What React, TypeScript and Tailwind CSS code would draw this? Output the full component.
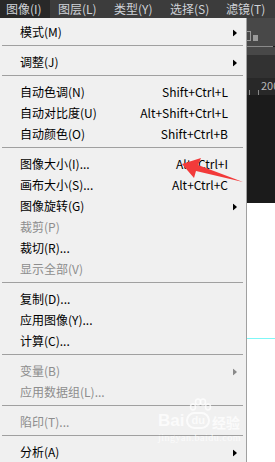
import React from 'react';

type Item =
  | { sep: true }
  | { label: string; shortcut?: string; sub?: boolean; disabled?: boolean; sep?: false };

const items: Item[] = [
  { label: '模式(M)', sub: true },
  { sep: true },
  { label: '调整(J)', sub: true },
  { sep: true },
  { label: '自动色调(N)', shortcut: 'Shift+Ctrl+L' },
  { label: '自动对比度(U)', shortcut: 'Alt+Shift+Ctrl+L' },
  { label: '自动颜色(O)', shortcut: 'Shift+Ctrl+B' },
  { sep: true },
  { label: '图像大小(I)...', shortcut: 'Alt+Ctrl+I' },
  { label: '画布大小(S)...', shortcut: 'Alt+Ctrl+C' },
  { label: '图像旋转(G)', sub: true },
  { label: '裁剪(P)', disabled: true },
  { label: '裁切(R)...' },
  { label: '显示全部(V)', disabled: true },
  { sep: true },
  { label: '复制(D)...' },
  { label: '应用图像(Y)...' },
  { label: '计算(C)...' },
  { sep: true },
  { label: '变量(B)', sub: true, disabled: true },
  { label: '应用数据组(L)...', disabled: true },
  { sep: true },
  { label: '陷印(T)...', disabled: true },
  { sep: true },
  { label: '分析(A)', sub: true },
];

const topMenus = ['图像(I)', '图层(L)', '类型(Y)', '选择(S)', '滤镜(T)'];

function Arrow({ gray }: { gray?: boolean }) {
  return (
    <svg width="4" height="7" viewBox="0 0 4 7" className="absolute right-[9px] top-1/2 -translate-y-1/2">
      <path d="M0 0 L4 3.5 L0 7 Z" fill={gray ? '#8a8a8a' : '#000'} />
    </svg>
  );
}

export default function App() {
  return (
    <div
      className="relative w-[275px] h-[462px] overflow-hidden bg-[#1b1b1b]"
      style={{ fontFamily: '"Noto Sans CJK SC", "Noto Sans", sans-serif' }}
    >
      {/* menubar */}
      <div className="h-[18px] flex items-center bg-[#3c3c3c] text-[12px] text-[#cfd3d8]">
        {topMenus.map((m, i) => (
          <div
            key={m}
            className={`h-full flex items-center ${i === 0 ? 'bg-[#282828] pl-[6px] pr-[8px] w-[50px]' : 'pl-[8px] pr-[8px] w-[56px]'}`}
          >
            {m}
          </div>
        ))}
      </div>

      <div className="flex h-[444px] items-start">
        {/* dropdown */}
        <div className="w-[247px] shrink-0 bg-[#f0f0f0] border-r border-[#a0a0a0] pt-[4px] text-[12px] leading-none">
          {items.map((it, i) =>
            it.sep ? (
              <div key={i} className="h-[9px] pt-[2px] pl-[2px] pr-[3px]">
                <div className="h-px bg-[#a0a0a0]" />
              </div>
            ) : (
              <div
                key={i}
                className={`relative h-[21px] flex items-center pl-[20px] pr-[18px] pb-[2px] ${it.disabled ? 'text-[#8d8d8d]' : 'text-black'}`}
              >
                <span className="flex-1">{it.label}</span>
                {it.shortcut && <span>{it.shortcut}</span>}
                {it.sub && <Arrow gray={it.disabled} />}
              </div>
            )
          )}
        </div>

        {/* workspace on the right */}
        <div className="w-[28px] h-[444px] shrink-0 flex flex-col">
          <div className="h-[28px] shrink-0 bg-[#484848] flex items-start pt-[13px] gap-[2px]">
            <div className="w-[4px] h-[10px] border border-l-0 border-[#9a9a9a]" />
            <div className="w-[5px] h-[6px] mt-[4px] bg-[#9a9a9a]" />
          </div>
          <div className="h-px shrink-0 bg-[#8a8a8a] mr-[2px]" />
          <div className="h-[8px] shrink-0 bg-[#484848]" />
          <div className="h-[23px] shrink-0 bg-[#323232]" />
          <div className="h-[17px] shrink-0 bg-[#282828] relative text-[11px] text-[#b8b8b8]">
            <div className="absolute left-[2px] bottom-0 w-px h-[5px] bg-[#888]" />
            <div className="absolute left-[11px] bottom-0 w-px h-[5px] bg-[#888]" />
            <span className="absolute left-[14px] top-[2px] leading-none">200</span>
          </div>
          <div className="h-[108px] shrink-0 bg-[#1b1b1b]" />
          <div className="h-[135px] shrink-0 bg-white" />
          <div className="h-px shrink-0 bg-[#7ff7f7]" />
          <div className="flex-1 bg-white" />
        </div>
      </div>

      {/* red annotation arrow */}
      <svg className="absolute left-0 top-0" width="275" height="462">
        <path d="M182 164 L201 158 L198 165 L243 182 L196 171 L194 178 Z" fill="#f23a3a" />
      </svg>

      {/* watermark */}
      <svg className="absolute left-[188px] top-[398px]" width="24" height="16" viewBox="0 0 24 16">
        <g fill="none" stroke="#ffffff" strokeOpacity="0.75" strokeWidth="1.5">
          <ellipse cx="5" cy="9" rx="2.5" ry="3" />
          <ellipse cx="10" cy="4" rx="2.5" ry="3" />
          <ellipse cx="15" cy="4" rx="2.5" ry="3" />
          <ellipse cx="20" cy="9" rx="2.5" ry="3" />
        </g>
      </svg>
      <div
        className="absolute left-[158px] top-[412px] text-white/75 leading-none select-none"
        style={{ fontFamily: '"Liberation Sans", sans-serif' }}
      >
        <div className="flex items-end gap-[2px] text-[17px] font-bold">
          <span>Bai</span>
          <span className="rounded-full border-2 border-white/75 px-[3px] py-[1px] text-[11px]">du</span>
          <span className="text-[14px]" style={{ fontFamily: '"Noto Sans CJK SC", sans-serif' }}>经验</span>
        </div>
        <div className="text-[10px] mt-[4px] tracking-[0.5px]" style={{ fontFamily: '"Liberation Serif", serif' }}>
          jingyan.baidu.com
        </div>
      </div>
    </div>
  );
}
